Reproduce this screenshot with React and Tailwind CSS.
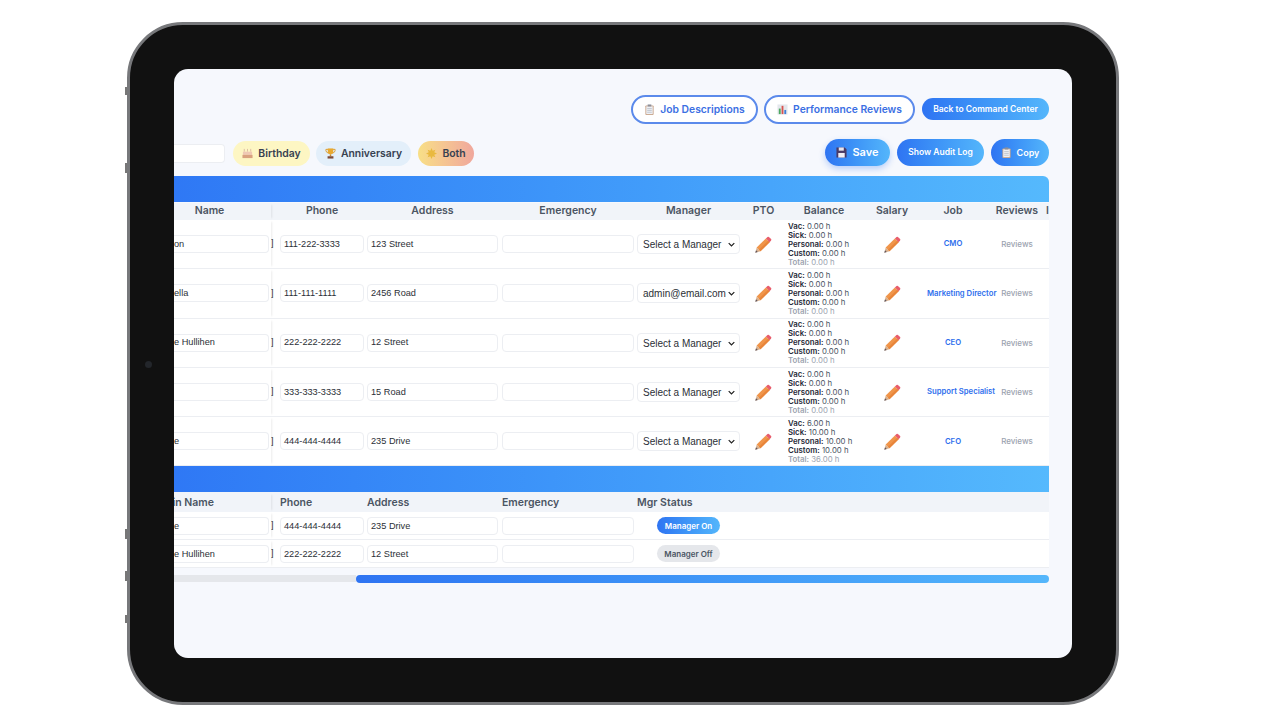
const pencil = (
  <svg viewBox="0 0 20 20" className="w-[18px] h-[18px] mt-[1px] -ml-[1px]">
    <path d="M1.5 18.5 L3 12.8 L7.2 17 Z" fill="#d9b08c" />
    <path d="M1.5 18.5 L2.2 15.8 L4.2 17.8 Z" fill="#5b5560" />
    <path d="M3 12.8 L13.2 2.8 L17.4 7 L7.2 17 Z" fill="#f0954a" />
    <path d="M5.5 15.300 L15.700 5.300 L17.4 7 L7.2 17 Z" fill="#e8853a" />
    <path d="M13.2 2.8 L15 1 Q15.8 .4 16.6 1 L19 3.4 Q19.6 4.2 19 5 L17.4 7 Z" fill="#e85d6c" />
  </svg>
);
const Cake = () => (
  <svg viewBox="0 0 12 12" className="w-[11px] h-[11px]">
    <path d="M2.5 1v3M6 1v3M9.5 1v3" stroke="#dcb9a0" strokeWidth="1" />
    <rect x="1" y="4" width="10" height="3.5" fill="#efc9b4" />
    <rect x="0.5" y="7.5" width="11" height="3.5" fill="#d9a27f" />
  </svg>
);
const Trophy = () => (
  <svg viewBox="0 0 12 12" className="w-[11px] h-[11px]">
    <path d="M1 1.5h10v1.5Q10.5 5 8.5 5.5H3.5Q1.5 5 1 3Z" fill="none" stroke="#d99a2b" strokeWidth="1" />
    <path d="M3 .5h6v3Q9 6.500 6 7 3 6.500 3 3.500Z" fill="#e9a92f" />
    <rect x="5.200" y="7" width="1.600" height="2" fill="#c98a28" />
    <rect x="2.800" y="9" width="6.400" height="2.500" fill="#7d4a36" />
  </svg>
);
const Sun = () => (
  <svg viewBox="0 0 12 12" className="w-[11px] h-[11px]">
    <path d="M6 0l1.300 3 2.900-1.200L9 4.700 12 6 9 7.300l1.200 2.900L7.300 9 6 12 4.700 9l-2.900 1.200L3 7.300 0 6l3-1.300L1.800 1.800l2.900 1.200Z" fill="#e9b93f" />
  </svg>
);
const Clip = () => (
  <svg viewBox="0 0 12 12" className="w-[11px] h-[11px]">
    <rect x="1.500" y="1.500" width="9" height="10.500" rx="1" fill="#c9a68c" />
    <rect x="2.500" y="2.500" width="7" height="8.500" fill="#eef0f4" />
    <rect x="4" y="0.500" width="4" height="2.200" fill="#8d8f99" />
    <path d="M3.500 5h5M3.500 7h5M3.500 9h5" stroke="#aab0bc" strokeWidth=".7" />
  </svg>
);
const Chart = () => (
  <svg viewBox="0 0 12 12" className="w-[11px] h-[11px]">
    <rect x="0.500" y="0.500" width="11" height="11" fill="#e4e7ec" />
    <rect x="2" y="5" width="2" height="6" fill="#4da860" />
    <rect x="5" y="2" width="2" height="9" fill="#d9534f" />
    <rect x="8" y="6.500" width="2" height="4.500" fill="#3f7fd9" />
  </svg>
);
const Floppy = () => (
  <svg viewBox="0 0 12 12" className="w-[11px] h-[11px]">
    <path d="M.5.500h9l2 2v9H.5Z" fill="#4a3a66" />
    <rect x="3" y="0.500" width="5.500" height="3.500" fill="#e8e6ee" />
    <rect x="2.500" y="6.500" width="7" height="5" fill="#f2eff5" />
  </svg>
);

const box = "h-[18px] bg-white border border-[#eceef2] rounded-[4px] flex items-center px-[3px] pt-[1px] text-[9.200px] text-[#2b2f36] whitespace-nowrap overflow-hidden shrink-0";
const arial = { fontFamily: '"Liberation Sans", Arial, sans-serif' };
const edge = "shadow-[3px_0_2px_-2px_rgba(0,0,0,0.08)]";

const rows = [
  { name: "on", phone: "111-222-3333", addr: "123 Street", mgr: "Select a Manager", b: ["0.00", "0.00", "0.00", "0.00", "0.00"], job: "CMO" },
  { name: "ella", phone: "111-111-1111", addr: "2456 Road", mgr: "admin@email.com", b: ["0.00", "0.00", "0.00", "0.00", "0.00"], job: "Marketing Director" },
  { name: "e Hullihen", phone: "222-222-2222", addr: "12 Street", mgr: "Select a Manager", b: ["0.00", "0.00", "0.00", "0.00", "0.00"], job: "CEO" },
  { name: "", phone: "333-333-3333", addr: "15 Road", mgr: "Select a Manager", b: ["0.00", "0.00", "0.00", "0.00", "0.00"], job: "Support Specialist" },
  { name: "e", phone: "444-444-4444", addr: "235 Drive", mgr: "Select a Manager", b: ["6.00", "10.00", "10.00", "10.00", "36.00"], job: "CFO" },
];

function Lead({ name }) {
  return (
    <>
      <div className={`w-[97px] h-full shrink-0 bg-white flex items-center pr-[2px] z-10 ${edge}`}>
        <div className={`${box} w-full rounded-l-none border-l-0 pl-0`} style={arial}>{name}</div>
      </div>
      <div className="w-[9px] shrink-0 text-[9px] text-[#333]" style={arial}>]</div>
    </>
  );
}

function Row({ r }) {
  const labels = ["Vac", "Sick", "Personal", "Custom", "Total"];
  return (
    <div className="flex items-center h-[49.3px] border-b border-[#eceef2] bg-white">
      <Lead name={r.name} />
      <div className={`${box} w-[84px] mr-[3px]`} style={arial}>{r.phone}</div>
      <div className={`${box} w-[131px] mr-[4px]`} style={arial}>{r.addr}</div>
      <div className={`${box} w-[132px] mr-[3px]`} />
      <div className={`${box} w-[103px] justify-between pl-[5px] pr-[4px] pt-0 h-[20px] text-[10px]`} style={arial}>
        <span>{r.mgr}</span>
        <svg viewBox="0 0 10 6" className="w-[7px] h-[5px]"><path d="M1 1l4 4 4-4" fill="none" stroke="#222" strokeWidth="1.800" /></svg>
      </div>
      <div className="w-[47px] shrink-0 flex justify-center">{pencil}</div>
      <div className="w-[70px] shrink-0 pl-[1px] text-[7.800px] leading-[9px] font-['Inter'] text-[#4b5563]">
        {labels.map((l, i) => (
          <div key={l} className={`whitespace-nowrap ${i === 4 ? "text-[#9ca3af]" : ""}`}>
            <span className={`font-semibold ${i === 4 ? "" : "text-[#1f2937]"}`}>{l}:</span> {r.b[i]} h
          </div>
        ))}
      </div>
      <div className="w-[70px] shrink-0 flex justify-center">{pencil}</div>
      <div className="w-[52px] shrink-0 text-center whitespace-nowrap text-[7.700px] font-semibold text-[#2f6fed] font-['Inter']">{r.job}</div>
      <div className="w-[69px] pl-[7px] shrink-0 text-center text-[8px] font-medium text-[#9ca3af] font-['Inter']">Reviews</div>
    </div>
  );
}

const th = "shrink-0 text-[10.500px] font-semibold text-[#4b5563] text-center font-['Inter'] pb-[2px]";
const th2 = "shrink-0 text-[10.500px] font-semibold text-[#4b5563] font-['Inter']";
const banner = "h-[26px] bg-gradient-to-r from-[#2f78f5] to-[#55b9fd]";
const grad = "bg-gradient-to-r from-[#2f74f2] to-[#54b6fb] text-white font-semibold rounded-full flex items-center justify-center gap-[5px]";
const outline = "h-[29px] bg-white border-2 border-[#5b8aeb] rounded-full text-[#3b6fe3] text-[10.300px] font-semibold flex items-center justify-center gap-[5px]";
const chip = "h-[25px] pt-[1px] rounded-full flex items-center justify-center text-[10.400px] font-semibold text-[#374151]";

export default function App() {
  return (
    <div className="w-[1280px] h-[720px] bg-white overflow-hidden pt-[22px] pl-[127px] font-['Inter']">
      <div className="relative w-[992px] h-[683px] rounded-[56px] bg-[#111111] border-[3px] border-[#77787b] p-[44px]">
        <div className="absolute left-[-5px] top-[62px] w-[2px] h-[8px] bg-[#777]" />
        <div className="absolute left-[-5px] top-[138px] w-[2px] h-[10px] bg-[#777]" />
        <div className="absolute left-[-5px] top-[504px] w-[2px] h-[10px] bg-[#777]" />
        <div className="absolute left-[-5px] top-[546px] w-[2px] h-[10px] bg-[#777]" />
        <div className="absolute left-[-5px] top-[590px] w-[2px] h-[8px] bg-[#777]" />
        <div className="absolute left-[15px] top-[336px] w-[7px] h-[7px] rounded-full bg-[#23262b]" />
        <div className="w-[898px] h-[589px] rounded-[14px] overflow-hidden bg-[#f6f8fd] pt-[26px] pr-[23px]">
          <div className="flex justify-end items-center gap-[6px] h-[29px]">
            <div className={`${outline} w-[127px]`}><Clip />Job Descriptions</div>
            <div className={`${outline} w-[151px]`}><Chart />Performance Reviews</div>
            <div className={`${grad} w-[127px] h-[22px] ml-[1px] -mt-[1px] text-[8.500px]`}>Back to Command Center</div>
          </div>
          <div className="flex items-center mt-[15px] h-[28px]">
            <div className="w-[51px] h-[19px] bg-white border border-[#eceef2] border-l-0 rounded-r-[4px]" />
            <div className={`${chip} ml-[8px] w-[77px] gap-[5px] bg-[#fdf6c3]`}><Cake />Birthday</div>
            <div className={`${chip} ml-[6px] w-[95px] gap-[5px] bg-[#e3effa]`}><Trophy />Anniversary</div>
            <div className={`${chip} ml-[7px] w-[56px] gap-[5px] bg-gradient-to-r from-[#f8df86] to-[#f0a79c]`}><Sun />Both</div>
            <div className={`${grad} ml-auto -mt-[1px] w-[65px] h-[27px] text-[11px] font-bold shadow-[0_3px_6px_rgba(47,116,242,0.3)]`}><Floppy />Save</div>
            <div className={`${grad} ml-[7px] -mt-[1px] w-[87px] h-[27px] text-[8.500px]`}>Show Audit Log</div>
            <div className={`${grad} ml-[7px] -mt-[1px] w-[58px] h-[27px] text-[9px]`}><Clip />Copy</div>
          </div>
          <div className="mt-[9px] overflow-hidden rounded-tr-[6px]">
            <div className={banner} />
            <div className="flex items-center h-[17px] bg-[#f1f4f9] mt-[1px]">
              <div className={`${th} w-[97px] h-full flex items-center justify-center pr-[26px] ${edge}`}>Name</div>
              <div className="w-[9px] shrink-0" />
              <div className={`${th} w-[84px] mr-[3px]`}>Phone</div>
              <div className={`${th} w-[131px] mr-[4px]`}>Address</div>
              <div className={`${th} w-[132px] mr-[3px]`}>Emergency</div>
              <div className={`${th} w-[103px]`}>Manager</div>
              <div className={`${th} w-[47px]`}>PTO</div>
              <div className={`${th} w-[70px] pl-[4px]`}>Balance</div>
              <div className={`${th} w-[70px]`}>Salary</div>
              <div className={`${th} w-[52px]`}>Job</div>
              <div className={`${th} w-[69px] pl-[7px]`}>Reviews</div>
              <div className={`${th} w-[3px] -ml-[2px] text-left`}>I</div>
            </div>
            {rows.map((r) => <Row key={r.phone} r={r} />)}
            <div className={banner} />
            <div className="flex items-center h-[20px] pt-[1px] bg-[#f1f4f9]">
              <div className={`${th2} w-[97px] h-full flex items-center justify-end pr-[57px] ${edge}`}><span className="whitespace-nowrap">in Name</span></div>
              <div className="w-[9px] shrink-0" />
              <div className={`${th2} w-[87px]`}>Phone</div>
              <div className={`${th2} w-[135px]`}>Address</div>
              <div className={`${th2} w-[135px]`}>Emergency</div>
              <div className={th2}>Mgr Status</div>
            </div>
            {[["e", "444-444-4444", "235 Drive", true], ["e Hullihen", "222-222-2222", "12 Street", false]].map(([n, p, a, on]) => (
              <div key={p} className="flex items-center h-[28px] bg-white border-b border-[#eceef2]">
                <Lead name={n} />
                <div className={`${box} w-[84px] mr-[3px]`} style={arial}>{p}</div>
                <div className={`${box} w-[131px] mr-[4px]`} style={arial}>{a}</div>
                <div className={`${box} w-[132px] mr-[3px]`} />
                <div className="w-[103px] shrink-0 flex justify-center">
                  <div className={`w-[63px] h-[17px] rounded-full flex items-center justify-center text-[8px] font-semibold ${on ? "bg-gradient-to-r from-[#2f74f2] to-[#54b6fb] text-white" : "bg-[#e5e7eb] text-[#4b5563]"}`}>{on ? "Manager On" : "Manager Off"}</div>
                </div>
              </div>
            ))}
          </div>
          <div className="flex h-[8px] mt-[7px]">
            <div className="w-[182px] h-[7px] bg-[#e5e7eb] shrink-0" />
            <div className="flex-1 rounded-full bg-gradient-to-r from-[#2f74f2] to-[#54b6fb]" />
          </div>
        </div>
      </div>
    </div>
  );
}
